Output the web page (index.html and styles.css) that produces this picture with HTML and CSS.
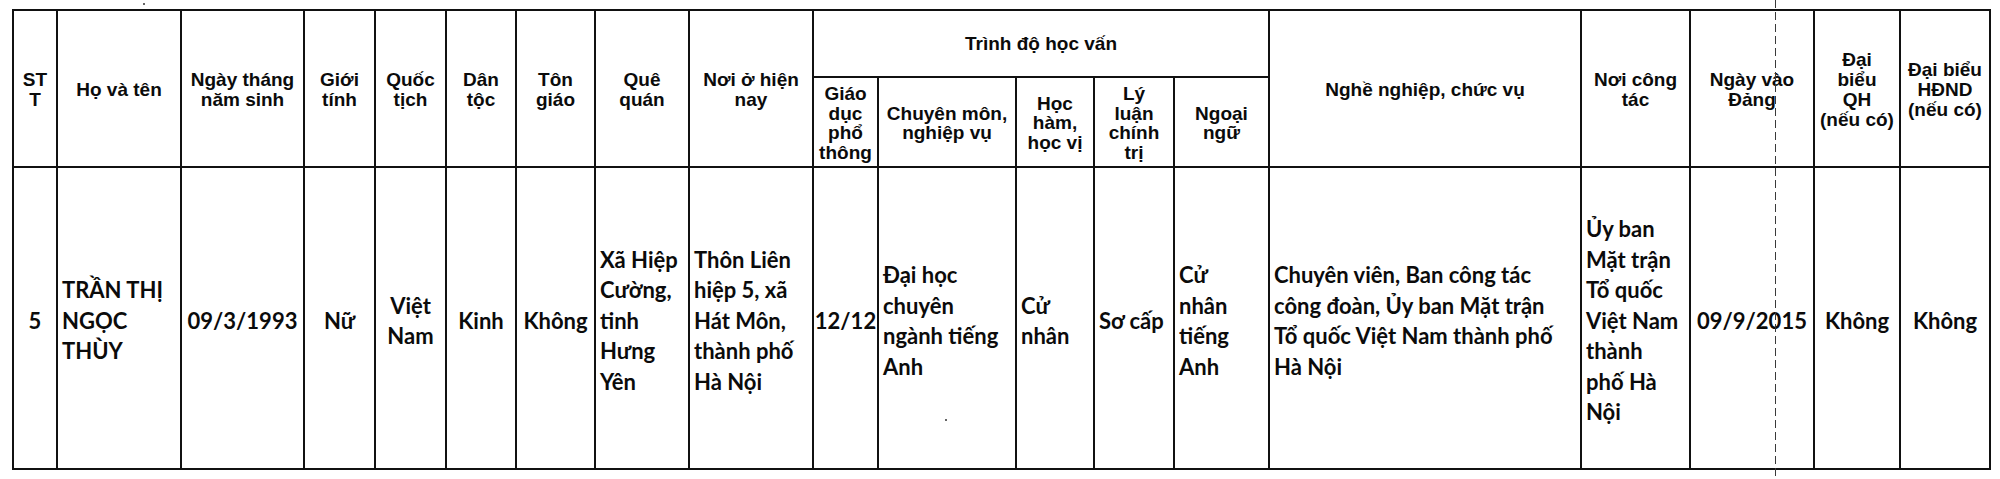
FILE: index.html
```html
<!DOCTYPE html>
<html lang="vi">
<head>
<meta charset="utf-8">
<title>Danh sách</title>
<link rel="stylesheet" href="styles.css">
</head>
<body>
<div class="sheet">
  <div class="c h span">ST<br>T</div>
  <div class="c h span">Họ và tên</div>
  <div class="c h span">Ngày tháng<br>năm sinh</div>
  <div class="c h span">Giới<br>tính</div>
  <div class="c h span">Quốc<br>tịch</div>
  <div class="c h span">Dân<br>tộc</div>
  <div class="c h span">Tôn<br>giáo</div>
  <div class="c h span">Quê<br>quán</div>
  <div class="c h span">Nơi ở hiện<br>nay</div>
  <div class="c h group">Trình độ học vấn</div>
  <div class="c h span">Nghề nghiệp, chức vụ</div>
  <div class="c h span">Nơi công<br>tác</div>
  <div class="c h span">Ngày vào<br>Đảng</div>
  <div class="c h span">Đại<br>biểu<br>QH<br>(nếu có)</div>
  <div class="c h span">Đại biểu<br>HĐND<br>(nếu có)</div>

  <div class="c h sub">Giáo<br>dục<br>phổ<br>thông</div>
  <div class="c h sub">Chuyên môn,<br>nghiệp vụ</div>
  <div class="c h sub">Học<br>hàm,<br>học vị</div>
  <div class="c h sub">Lý<br>luận<br>chính<br>trị</div>
  <div class="c h sub">Ngoại<br>ngữ</div>

  <div class="c b mid">5</div>
  <div class="c b left">TRẦN THỊ<br>NGỌC<br>THÙY</div>
  <div class="c b mid">09/3/1993</div>
  <div class="c b mid">Nữ</div>
  <div class="c b mid">Việt<br>Nam</div>
  <div class="c b mid">Kinh</div>
  <div class="c b mid">Không</div>
  <div class="c b left">Xã Hiệp<br>Cường,<br>tinh<br>Hưng<br>Yên</div>
  <div class="c b left">Thôn Liên<br>hiệp 5, xã<br>Hát Môn,<br>thành phố<br>Hà Nội</div>
  <div class="c b mid">12/12</div>
  <div class="c b left">Đại học<br>chuyên<br>ngành tiếng<br>Anh</div>
  <div class="c b left">Cử<br>nhân</div>
  <div class="c b left">Sơ cấp</div>
  <div class="c b left">Cử<br>nhân<br>tiếng<br>Anh</div>
  <div class="c b left">Chuyên viên, Ban công tác<br>công đoàn, Ủy ban Mặt trận<br>Tổ quốc Việt Nam thành phố<br>Hà Nội</div>
  <div class="c b left">Ủy ban<br>Mặt trận<br>Tổ quốc<br>Việt Nam<br>thành<br>phố Hà<br>Nội</div>
  <div class="c b mid">09/9/2015</div>
  <div class="c b mid">Không</div>
  <div class="c b mid">Không</div>
</div>
<div class="fold"></div>
<div class="speck speck-a"></div>
<div class="speck speck-b"></div>
</body>
</html>
```
FILE: styles.css
```css
html, body {
  margin: 0;
  background: #ffffff;
}

body {
  position: relative;
  width: 2000px;
  height: 479px;
  box-sizing: border-box;
  padding: 9px 0 0 12px;
  overflow: hidden;
  color: #0b0b0b;
}

.sheet {
  display: grid;
  grid-template-columns: 44px 124px 123px 71px 71px 70px 79px 94px 124px 65px 138px 78px 80px 95px 312px 109px 124px 86px 90px;
  grid-template-rows: 67px 90px 302px;
  width: max-content;
  border-left: 2px solid #111;
  border-top: 2px solid #111;
}

.c {
  box-sizing: border-box;
  border-right: 2px solid #111;
  border-bottom: 2px solid #111;
  display: flex;
  align-items: center;
  justify-content: center;
  text-align: center;
  white-space: nowrap;
}

.h {
  font-family: "Liberation Sans", Arial, sans-serif;
  font-weight: 700;
  font-size: 19px;
  line-height: 20px;
  padding-top: 2px;
}

.span {
  grid-row: 1 / 3;
}

.group {
  grid-row: 1;
  grid-column: span 5;
  padding-top: 0;
}

.sub {
  grid-row: 2;
  line-height: 19.5px;
}

.b {
  grid-row: 3;
  font-family: Lato, "Open Sans", sans-serif;
  font-weight: 700;
  font-size: 22px;
  line-height: 30.5px;
  padding-top: 6px;
}

.left {
  justify-content: flex-start;
  text-align: left;
  padding-left: 4px;
}

.fold {
  position: absolute;
  left: 1775px;
  top: 0;
  width: 1px;
  height: 479px;
  background: repeating-linear-gradient(to bottom, #3a3a3a 0 8px, transparent 8px 12px);
}

.speck {
  position: absolute;
  width: 2px;
  height: 2px;
  border-radius: 50%;
  background: #333;
}

.speck-a {
  left: 143px;
  top: 3px;
}

.speck-b {
  left: 945px;
  top: 419px;
}
```
